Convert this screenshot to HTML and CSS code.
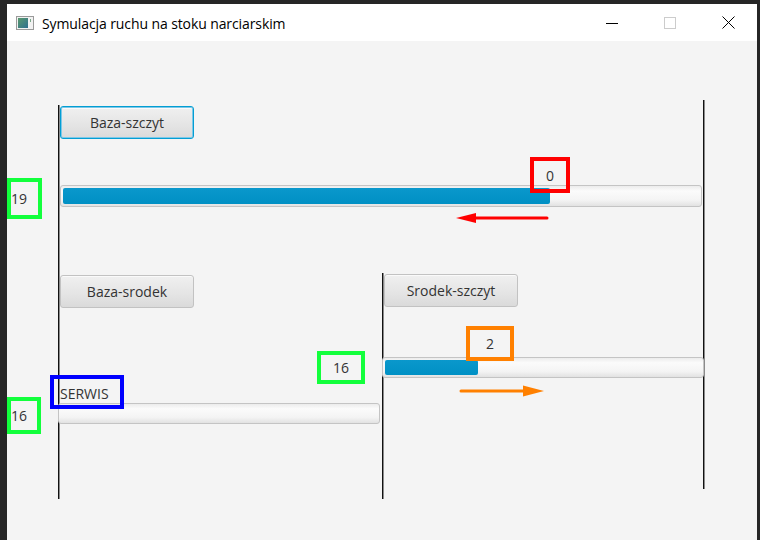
FILE: index.html
```html
<!DOCTYPE html>
<html lang="pl">
<head>
<meta charset="utf-8">
<title>Symulacja ruchu na stoku narciarskim</title>
<link rel="stylesheet" href="styles.css">
</head>
<body>
<div class="window">
  <header class="titlebar">
    <svg class="app-icon" width="18" height="14" viewBox="0 0 18 14">
      <defs>
        <linearGradient id="g" x1="0" y1="0" x2="1" y2="1">
          <stop offset="0" stop-color="#5a9a6e"/>
          <stop offset="1" stop-color="#2f6f8f"/>
        </linearGradient>
      </defs>
      <rect x="0.5" y="0.5" width="17" height="13" fill="#f2f2f2" stroke="#9a9a9a"/>
      <rect x="2" y="2" width="10" height="10" fill="url(#g)"/>
      <rect x="14" y="3" width="1" height="3" fill="#7aa88a"/>
    </svg>
    <span class="title">Symulacja ruchu na stoku narciarskim</span>
    <div class="controls">
      <span class="ctl"><svg width="12" height="12" viewBox="0 0 12 12"><path d="M0 6.5H12" stroke="#000" stroke-width="1"/></svg></span>
      <span class="ctl"><svg width="12" height="12" viewBox="0 0 12 12"><rect x="0.5" y="0.5" width="11" height="11" fill="none" stroke="#cccccc"/></svg></span>
      <span class="ctl"><svg width="13" height="13" viewBox="0 0 13 13"><path d="M0.5 0.5L12.5 12.5M12.5 0.5L0.5 12.5" stroke="#000" stroke-width="1"/></svg></span>
    </div>
  </header>
  <main class="canvas">
    <div class="vline v1"></div>
    <div class="vline v2"></div>
    <div class="vline v3"></div>

    <button class="btn focused b1">Baza-szczyt</button>
    <button class="btn b2">Baza-srodek</button>
    <button class="btn b3">Srodek-szczyt</button>

    <div class="bar p1"><div class="fill" style="width:487px"></div></div>
    <div class="bar p2"><div class="fill" style="width:93px"></div></div>
    <div class="bar p3"></div>

    <div class="box green edge n19">19</div>
    <div class="box green edge n16a">16</div>
    <div class="box green n16b">16</div>
    <div class="box red n0">0</div>
    <div class="box orange n2">2</div>
    <div class="box blue serwis">SERWIS</div>

    <svg class="arrow a-red" width="94" height="12" viewBox="0 0 94 12">
      <path d="M19 6H91" stroke="#ff0000" stroke-width="3" stroke-linecap="round"/>
      <path d="M0 6L20 1V11Z" fill="#ff0000"/>
    </svg>
    <svg class="arrow a-orange" width="86" height="12" viewBox="0 0 86 12">
      <path d="M2 6H67" stroke="#ff8000" stroke-width="3" stroke-linecap="round"/>
      <path d="M85 6L64 0.5V11.5Z" fill="#ff8000"/>
    </svg>
  </main>
</div>
</body>
</html>
```
FILE: styles.css
```css
html, body {
  margin: 0;
  padding: 0;
  width: 760px;
  height: 540px;
  overflow: hidden;
  background: #262626;
  font-family: "Open Sans", "Noto Sans", "Liberation Sans", sans-serif;
}

.window {
  margin: 4px 0 0 7px;
  width: 750px;
  height: 536px;
  display: flex;
  flex-direction: column;
  background: #f4f4f4;
}

.titlebar {
  height: 37px;
  flex: none;
  background: #ffffff;
  display: flex;
  align-items: center;
}

.app-icon {
  margin-left: 9px;
  margin-top: 1px;
  flex: none;
}

.title {
  margin-left: 8px;
  font-family: "Open Sans", "Noto Sans", sans-serif;
  font-size: 14px;
  color: #000;
  letter-spacing: -0.1px;
  margin-top: 1px;
}

.controls {
  margin-left: auto;
  display: flex;
  height: 100%;
}

.ctl {
  width: 58px;
  display: flex;
  align-items: center;
  justify-content: center;
}
.ctl svg { display: block; }

.canvas {
  position: relative;
  flex: 1;
  overflow: hidden;
}

.vline {
  position: absolute;
  width: 1px;
  background: #111;
  box-shadow: 1px 0 0 #8a8a8a;
}
.v1 { left: 51px; top: 64px; height: 394px; }
.v2 { left: 375px; top: 232px; height: 226px; }
.v3 { left: 696px; top: 59px; height: 389px; }

.btn {
  position: absolute;
  width: 134px;
  height: 33px;
  box-sizing: border-box;
  border: 1px solid #c2c2c2;
  border-radius: 3px;
  background: linear-gradient(#f0f0f0, #e4e4e4 60%, #dadada);
  box-shadow: inset 0 1px 0 #fafafa;
  font-family: "Open Sans", "Noto Sans", sans-serif;
  font-size: 14px;
  color: #333;
  padding: 0;
}
.btn.focused {
  border: 1px solid #039ed3;
  box-shadow: 0 0 0 1px #7dc8e8 inset, inset 0 2px 0 #fafafa;
}
.b1 { left: 53px; top: 65px; }
.b2 { left: 53px; top: 234px; }
.b3 { left: 377px; top: 233px; }

.bar {
  position: absolute;
  height: 21px;
  box-sizing: border-box;
  border: 1px solid #c4c4c4;
  border-radius: 3px;
  background: linear-gradient(#ececec, #fbfbfb 25%, #f4f4f4 70%, #e2e2e2);
  padding: 2px;
}
.fill {
  height: 15px;
  border-radius: 2px;
  background: linear-gradient(#0a98cc, #0090c4);
}
.p1 { left: 53px; top: 144px; width: 642px; height: 22px; }
.p1 .fill { height: 16px; }
.p2 { left: 375px; top: 316px; width: 322px; }
.p3 { left: 51px; top: 362px; width: 322px; }

.box {
  position: absolute;
  box-sizing: border-box;
  border: 4px solid;
  display: flex;
  align-items: center;
  justify-content: center;
  font-family: "Open Sans", "Noto Sans", sans-serif;
  font-size: 14px;
  color: #333;
}
.green { border-color: #12ff3c; }
.red { border-color: #ff0000; }
.orange { border-color: #ff8000; }
.blue { border-color: #0000ff; }

.box.edge {
  justify-content: flex-start;
  padding-left: 0;
}
.n19 { left: 0; top: 137px; width: 35px; height: 41px; }
.n16a { left: 0; top: 356px; width: 34px; height: 37px; }
.n16b { left: 310px; top: 310px; width: 48px; height: 33px; }
.n0 { left: 523px; top: 116px; width: 40px; height: 36px; }
.n2 { left: 459px; top: 285px; width: 48px; height: 35px; }
.serwis {
  left: 43px; top: 334px; width: 74px; height: 34px;
  justify-content: flex-start;
  align-items: flex-end;
  padding: 0 0 2px 6px;
  z-index: 1;
}

.arrow {
  position: absolute;
  display: block;
}
.a-red { left: 449px; top: 171px; }
.a-orange { left: 452px; top: 344px; }
```
